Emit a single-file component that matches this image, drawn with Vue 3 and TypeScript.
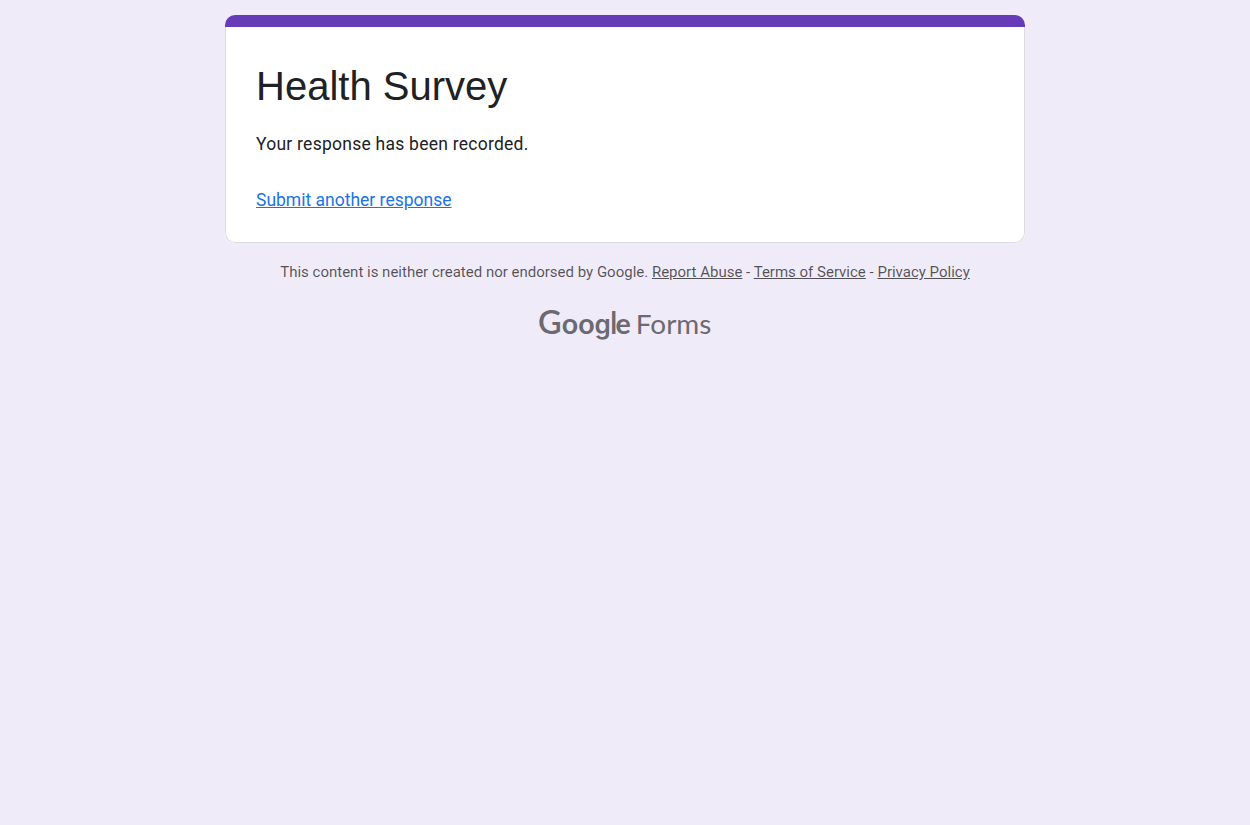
<script setup lang="ts">
interface FooterLink {
  label: string
  href: string
}

const title = 'Health Survey'
const message = 'Your response has been recorded.'
const links: FooterLink[] = [
  { label: 'Report Abuse', href: '#report' },
  { label: 'Terms of Service', href: '#terms' },
  { label: 'Privacy Policy', href: '#privacy' },
]
</script>

<template>
  <main class="page">
    <section class="card">
      <div class="accent"></div>
      <div class="body">
        <h1 class="title">{{ title }}</h1>
        <p class="message">{{ message }}</p>
        <a class="again" href="#again">Submit another response</a>
      </div>
    </section>
    <footer class="footer">
      <p class="legal">
        This content is neither created nor endorsed by Google.
        <template v-for="(link, i) in links" :key="link.label"><template v-if="i > 0"> - </template><a :href="link.href">{{ link.label }}</a></template>
      </p>
      <svg class="logo" width="190" height="50" viewBox="0 0 190 50" role="img" aria-label="Google Forms">
        <text class="brand" y="33.5"><tspan class="cap" x="8">G</tspan><tspan x="31.8 48.2">oo</tspan><tspan class="bowl" x="64.4">g</tspan><tspan class="stem" x="80">l</tspan><tspan x="85.4">e</tspan></text>
        <text class="product" x="105.8" y="34" textLength="75.6" lengthAdjust="spacingAndGlyphs">Forms</text>
      </svg>
    </footer>
  </main>
</template>

<style>
body {
  margin: 0;
  background: #f0ebf8;
}
</style>

<style scoped>
.page {
  box-sizing: border-box;
  min-height: 100vh;
  padding-top: 15px;
  background: #f0ebf8;
  font-family: Roboto, "Liberation Sans", sans-serif;
}

.card {
  box-sizing: border-box;
  width: 800px;
  height: 228px;
  margin: 0 auto;
  overflow: hidden;
  border-radius: 10px;
  background: #fff;
  display: flex;
  flex-direction: column;
}

.accent {
  flex: none;
  height: 12px;
  background: #673ab7;
}

.body {
  box-sizing: border-box;
  flex: 1;
  padding: 34px 30px 0;
  border: 1px solid #dadce0;
  border-top: 0;
  border-radius: 0 0 10px 10px;
}

.title {
  margin: 0;
  font: 400 40px/50px "Liberation Sans", Arial, sans-serif;
  color: #202124;
}

.message {
  margin: 21px 0 31px;
  font-size: 17.5px;
  line-height: 25px;
  letter-spacing: 0.25px;
  color: #202124;
}

.again {
  display: block;
  width: max-content;
  font-size: 17.5px;
  line-height: 25px;
  color: #1a73e8;
}

.footer {
  display: flex;
  flex-direction: column;
  align-items: center;
}

.legal {
  margin: 19px 0 0;
  font-size: 15px;
  line-height: 20px;
  color: rgba(0, 0, 0, 0.66);
}

.legal a {
  color: inherit;
}

.logo {
  margin-top: 18px;
  fill: #6c6970;
  font-family: Lato, sans-serif;
}

.brand {
  font-size: 28.5px;
  font-weight: 700;
}

.cap {
  font-size: 32.5px;
  font-weight: 600;
}

.bowl {
  font-family: Inter, sans-serif;
  font-size: 26px;
  font-weight: 600;
}

.stem {
  font-size: 30.5px;
  font-weight: 600;
}

.product {
  font-size: 27.5px;
  font-weight: 400;
}
</style>
